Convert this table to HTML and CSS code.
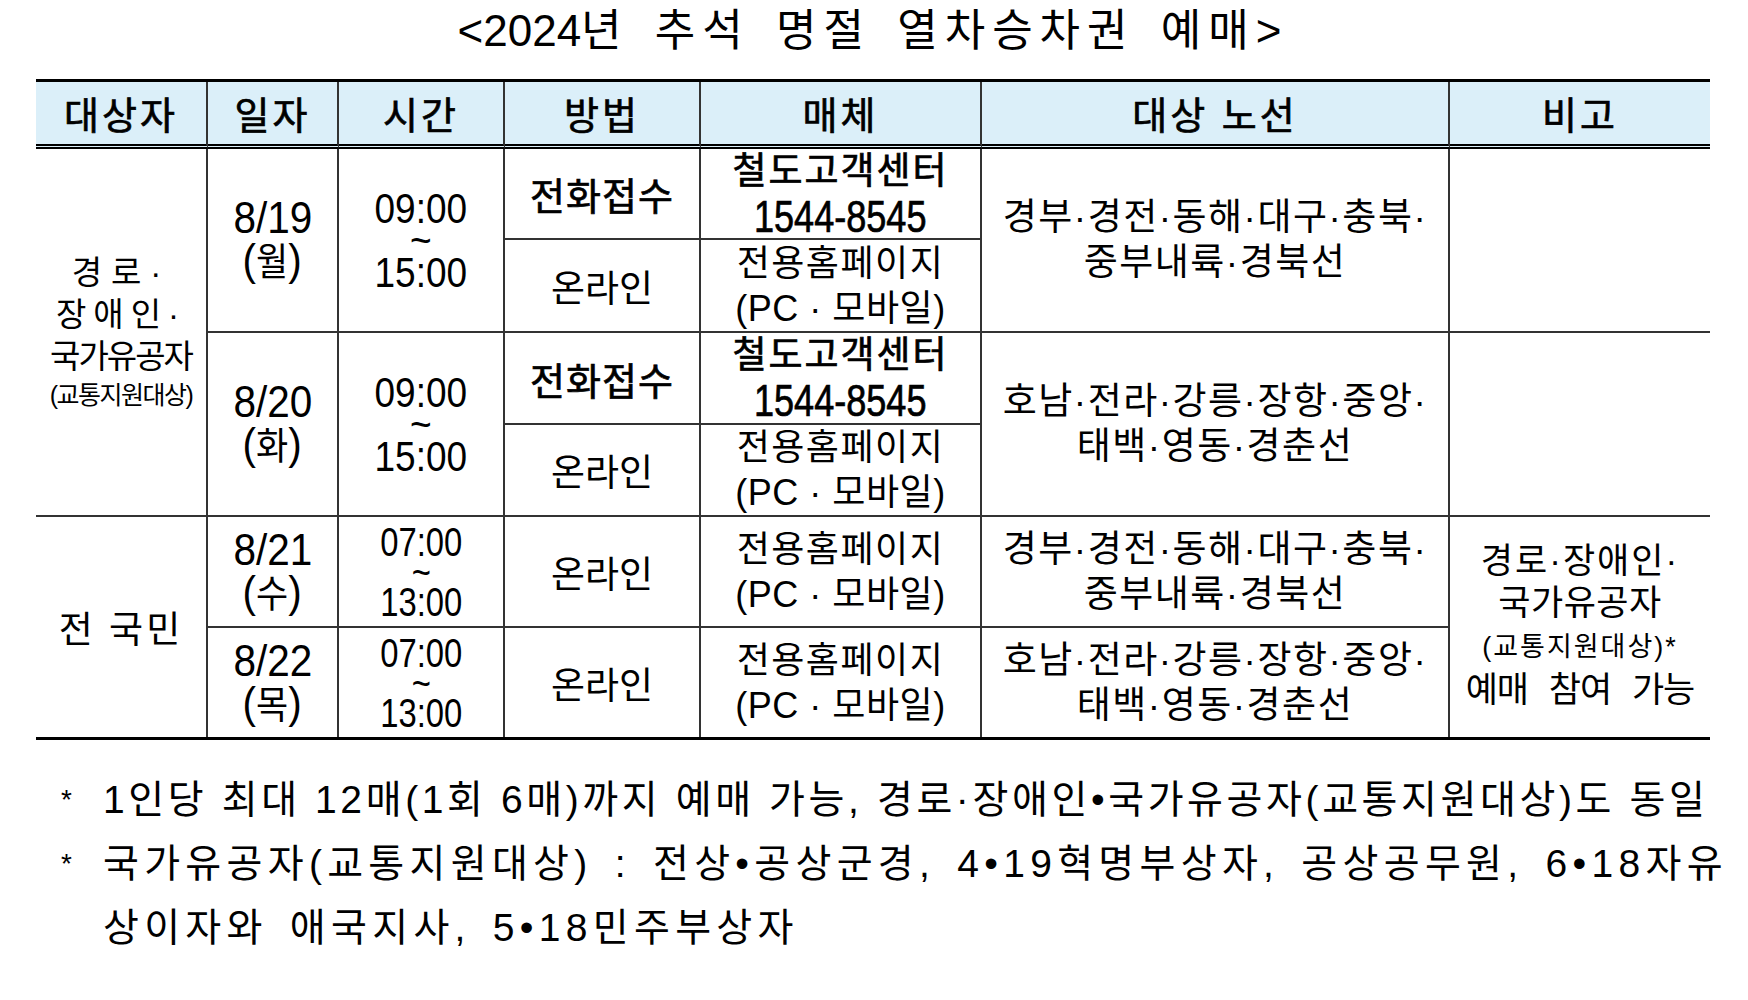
FILE: index.html
```html
<!DOCTYPE html>
<html lang="ko">
<head>
<meta charset="utf-8">
<title>2024년 추석 명절 열차승차권 예매</title>
<link rel="stylesheet" href="styles.css">
</head>
<body>
<div class="page">
  <h1 class="title"><span class="tn">&lt;2024</span>년 추석 명절 열차승차권 예매&gt;</h1>

  <div class="grid">
    <div class="c h">대상자</div>
    <div class="c h">일자</div>
    <div class="c h">시간</div>
    <div class="c h">방법</div>
    <div class="c h">매체</div>
    <div class="c h">대상 노선</div>
    <div class="c h e">비고</div>

    <!-- group 1 -->
    <div class="c k1 r2 s4 who">
      <span class="w1">경로·</span>
      <span class="w2">장애인·</span>
      <span class="w3">국가유공자</span>
      <span class="w4">(교통지원대상)</span>
    </div>
    <div class="c k2 r2 s2 date"><span class="dt">8/19</span><span class="dt">(<span class="wd">월</span>)</span></div>
    <div class="c k3 r2 s2 time"><span class="tm">09:00<br>~<br>15:00</span></div>
    <div class="c k4 r2 m b">전화접수</div>
    <div class="c k5 r2 md b"><span class="ls2">철도고객센터</span><span class="ph">1544-8545</span></div>
    <div class="c k6 r2 s2 rt"><span>경부·경전·동해·대구·충북·</span><span>중부내륙·경북선</span></div>
    <div class="c k7 r2 s2 e"></div>
    <div class="c k4 r3 m">온라인</div>
    <div class="c k5 r3 md"><span class="ls15">전용홈페이지</span><span class="ls05">(PC · 모바일)</span></div>

    <div class="c k2 r4 s2 date"><span class="dt">8/20</span><span class="dt">(<span class="wd">화</span>)</span></div>
    <div class="c k3 r4 s2 time"><span class="tm">09:00<br>~<br>15:00</span></div>
    <div class="c k4 r4 m b">전화접수</div>
    <div class="c k5 r4 md b"><span class="ls2">철도고객센터</span><span class="ph">1544-8545</span></div>
    <div class="c k6 r4 s2 rt"><span>호남·전라·강릉·장항·중앙·</span><span>태백·영동·경춘선</span></div>
    <div class="c k7 r4 s2 e"></div>
    <div class="c k4 r5 m">온라인</div>
    <div class="c k5 r5 md"><span class="ls15">전용홈페이지</span><span class="ls05">(PC · 모바일)</span></div>

    <!-- group 2 -->
    <div class="c k1 r6 s2 z all">전 국민</div>
    <div class="c k2 r6 date"><span class="dt">8/21</span><span class="dt">(<span class="wd">수</span>)</span></div>
    <div class="c k3 r6 time sm"><span class="tm">07:00<br>~<br>13:00</span></div>
    <div class="c k4 r6 m">온라인</div>
    <div class="c k5 r6 md"><span class="ls15">전용홈페이지</span><span class="ls05">(PC · 모바일)</span></div>
    <div class="c k6 r6 rt"><span>경부·경전·동해·대구·충북·</span><span>중부내륙·경북선</span></div>
    <div class="c k7 r6 s2 e z rem">
      <span class="x1">경로·장애인·</span>
      <span class="x2">국가유공자</span>
      <span class="x3">(교통지원대상)*</span>
      <span class="x4">예매 참여 가능</span>
    </div>

    <div class="c k2 r7 z date"><span class="dt">8/22</span><span class="dt">(<span class="wd">목</span>)</span></div>
    <div class="c k3 r7 z time sm"><span class="tm">07:00<br>~<br>13:00</span></div>
    <div class="c k4 r7 z m">온라인</div>
    <div class="c k5 r7 z md"><span class="ls15">전용홈페이지</span><span class="ls05">(PC · 모바일)</span></div>
    <div class="c k6 r7 z rt"><span>호남·전라·강릉·장항·중앙·</span><span>태백·영동·경춘선</span></div>
  </div>

  <div class="notes">
    <p class="note n1"><span class="ast">*</span><span class="nt">1인당 최대 12매(1회 6매)까지 예매 가능, 경로·장애인•국가유공자(교통지원대상)도 동일</span></p>
    <p class="note n2"><span class="ast">*</span><span class="nt">국가유공자(교통지원대상) : 전상•공상군경, 4•19혁명부상자, 공상공무원, 6•18자유<br>상이자와 애국지사, 5•18민주부상자</span></p>
  </div>
</div>
</body>
</html>
```

FILE: styles.css
```css
html, body {
  margin: 0;
  padding: 0;
  background: #ffffff;
}

body {
  color: #000000;
  font-family: "Liberation Sans", "Noto Sans CJK KR", sans-serif;
}

.page {
  width: 1674px;
  margin-left: 36px;
}

.title {
  margin: 0;
  height: 79px;
  font-size: 44px;
  font-weight: 400;
  line-height: 62px;
  text-align: center;
  letter-spacing: 7px;
  word-spacing: 7px;
  white-space: nowrap;
}

.title .tn { letter-spacing: 0; }

/* ---------- table ---------- */
.grid {
  display: grid;
  grid-template-columns: 172px 131px 166px 196px 281px 468px 260px;
  grid-template-rows: 67px 91px 93px 92px 92px 111px 109px;
  border-top: 3px solid #000;
  border-bottom: 3px solid #000;
}

.c {
  box-sizing: border-box;
  display: flex;
  flex-direction: column;
  justify-content: center;
  align-items: center;
  text-align: center;
  white-space: nowrap;
  border-right: 2px solid #333;
  border-bottom: 2px solid #333;
}

.c.e { border-right: none; }
.c.z { border-bottom: none; }

.h {
  background: #dbeff9;
  border-bottom: 5px double #000;
  font-size: 38px;
  line-height: 44px;
  letter-spacing: 3px;
  padding-top: 5px;
  -webkit-text-stroke: 0.7px #000;
}

.k1 { grid-column: 1; }
.k2 { grid-column: 2; }
.k3 { grid-column: 3; }
.k4 { grid-column: 4; }
.k5 { grid-column: 5; }
.k6 { grid-column: 6; }
.k7 { grid-column: 7; }
.r2 { grid-row-start: 2; }
.r3 { grid-row-start: 3; }
.r4 { grid-row-start: 4; }
.r5 { grid-row-start: 5; }
.r6 { grid-row-start: 6; }
.r7 { grid-row-start: 7; }
.s2 { grid-row-end: span 2; }
.s4 { grid-row-end: span 4; }

/* target group column */
.who { font-size: 33px; line-height: 42px; }
.who .w1 { letter-spacing: 9px; }
.who .w2 { letter-spacing: 7px; }
.who .w3 { letter-spacing: -2px; }
.who .w4 { font-size: 25px; line-height: 34px; letter-spacing: -1.5px; }

.all { font-size: 37px; letter-spacing: 3px; }

/* dates */
.date { font-size: 44px; line-height: 42px; }
.date .dt { transform: scaleX(0.92); }
.date .wd { font-size: 38px; }

/* times */
.time { font-size: 43px; line-height: 32px; }
.time .tm { transform: scaleX(0.86); }
.time.sm { font-size: 41px; line-height: 30px; }
.time.sm .tm { transform: scaleX(0.8); }

/* method */
.m { font-size: 37px; }
.m.b { font-size: 38px; letter-spacing: 1px; }
.b { -webkit-text-stroke: 0.7px #000; }

/* media */
.md { font-size: 36px; line-height: 45px; }
.md.b { font-size: 37px; }
.ls05 { letter-spacing: 0.5px; }
.ls15 { letter-spacing: 1.5px; }
.ls2 { letter-spacing: 2px; }
.ph { font-size: 44px; transform: scaleX(0.82); }

/* routes */
.rt { font-size: 37px; line-height: 45px; letter-spacing: 1.5px; }

/* remarks */
.rem { font-size: 35px; padding-bottom: 4px; }
.rem .x1 { line-height: 42px; letter-spacing: 2px; }
.rem .x2 { line-height: 42px; letter-spacing: 0.5px; }
.rem .x3 { font-size: 27px; line-height: 46px; letter-spacing: 2px; }
.rem .x4 { line-height: 40px; letter-spacing: -1px; word-spacing: 12px; }

/* ---------- notes ---------- */
.notes { padding-top: 28px; }

.note {
  display: flex;
  margin: 0;
  font-size: 39px;
  line-height: 64px;
  white-space: nowrap;
}

.ast {
  flex: none;
  box-sizing: border-box;
  width: 67px;
  padding-left: 25px;
  font-size: 28px;
}

.note .nt { letter-spacing: 3.6px; }
.n2 .nt { letter-spacing: 5.3px; word-spacing: 6px; }
```
